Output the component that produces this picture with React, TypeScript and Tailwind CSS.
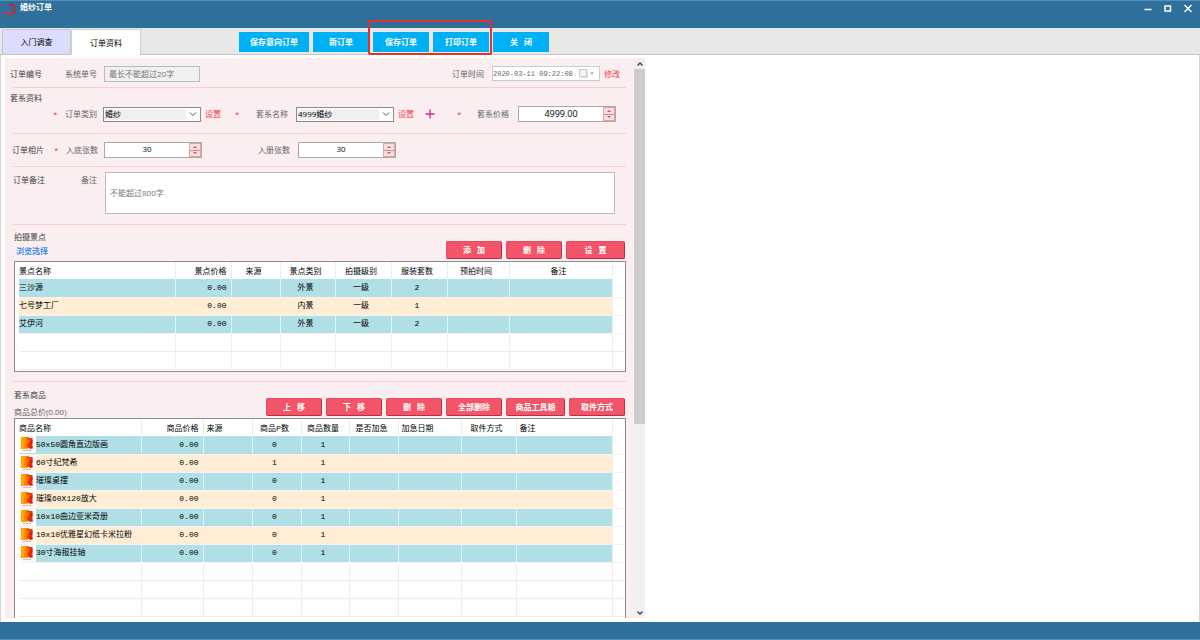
import { useState } from "react";
import type { ReactNode } from "react";

type Align = "left" | "center" | "right";

type Column = {
  title: string;
  width: string;
  align: Align;
  pad?: boolean;
};

const spotColumns: Column[] = [
  { title: "景点名称", width: "w-[156px]", align: "left" },
  { title: "景点价格", width: "w-14", align: "right" },
  { title: "来源", width: "w-[49px]", align: "center" },
  { title: "景点类别", width: "w-[55px]", align: "center" },
  { title: "拍摄级别", width: "w-14", align: "center" },
  { title: "服装套数", width: "w-14", align: "center" },
  { title: "预拍时间", width: "w-[62px]", align: "center" },
  { title: "备注", width: "w-auto", align: "center" },
];

const spots = [
  ["三沙源", "0.00", "", "外景", "一级", "2", "", ""],
  ["七号梦工厂", "0.00", "", "内景", "一级", "1", "", ""],
  ["艾伊河", "0.00", "", "外景", "一级", "2", "", ""],
];

const goodsColumns: Column[] = [
  { title: "商品名称", width: "w-[122px]", align: "left" },
  { title: "商品价格", width: "w-[62px]", align: "right" },
  { title: "来源", width: "w-[49px]", align: "left", pad: true },
  { title: "商品P数", width: "w-[49px]", align: "center" },
  { title: "商品数量", width: "w-12", align: "center" },
  { title: "是否加急", width: "w-[49px]", align: "center" },
  { title: "加急日期", width: "w-[63px]", align: "left", pad: true },
  { title: "取件方式", width: "w-[55px]", align: "center" },
  { title: "备注", width: "w-auto", align: "left", pad: true },
];

const goods = [
  ["50x50圆角直边版画", "0.00", "", "0", "1", "", "", "", ""],
  ["60寸纪梵希", "0.00", "", "1", "1", "", "", "", ""],
  ["璀璨桌摆", "0.00", "", "0", "1", "", "", "", ""],
  ["璀璨60X120放大", "0.00", "", "0", "1", "", "", "", ""],
  ["10x10曲边亚米奇册", "0.00", "", "0", "1", "", "", "", ""],
  ["10x10优雅星幻纸卡米拉粉", "0.00", "", "0", "1", "", "", "", ""],
  ["30寸海报挂轴", "0.00", "", "0", "1", "", "", "", ""],
];

const alignClass: Record<Align, string> = {
  left: "text-left",
  center: "text-center",
  right: "text-right",
};

function ProductIcon() {
  return (
    <svg viewBox="0 0 14 17" className="h-[17px] w-3.5 shrink-0" aria-hidden="true">
      <rect width="14" height="17" fill="#fbf6f3" />
      <rect x="1" y="1" width="7" height="12" fill="#ffa800" />
      <path d="M5 1 H9 V12 H4 Z" fill="#f98200" />
      <path d="M7 2 H12.5 V12.5 H10 L7 11 Z" fill="#ee3a10" />
      <path d="M10 5 L12.5 3.5 V7 L10.5 9 L12.5 11 V12.5 H9.5 Z" fill="#d0240c" />
      <path d="M6.5 2 L10 4.5 L7 9 Z" fill="#ff6a00" />
      <path d="M3 14.5 H5 M6 14.5 H8 M9 14.5 H11" stroke="#c9a5a5" strokeWidth="1" />
    </svg>
  );
}

function DataTable({
  columns,
  rows,
  blank,
  icons = false,
}: {
  columns: Column[];
  rows: string[][];
  blank: number;
  icons?: boolean;
}) {
  return (
    <table className="w-full table-fixed border-collapse text-[8px] leading-3 text-black">
      <thead>
        <tr className="h-[17px]">
          {columns.map((c) => (
            <th
              key={c.title}
              className={`${c.width} ${alignClass[c.align]} ${
                c.pad ? "pl-[3px]" : "pl-0"
              } whitespace-nowrap border-r border-[#ececec] py-0 pr-1 font-normal`}
            >
              {c.title}
            </th>
          ))}
          <th className="w-[13px] p-0" />
        </tr>
      </thead>
      <tbody className="font-['Liberation_Mono','Noto_Sans_CJK_SC',monospace]">
        {rows.map((row, i) => (
          <tr key={row[0]} className="h-[18px]">
            {row.map((cell, j) => (
              <td
                key={j}
                className={`${alignClass[columns[j].align]} ${
                  i % 2 === 0 ? "border-r-[#e4f3f5] bg-[#b0dfe5]" : "border-r-[#f9ecda] bg-[#ffeed5]"
                } whitespace-nowrap border-b border-r border-b-[#f4f4f0] p-0 ${j === 0 ? "" : "pr-1"}`}
              >
                {icons && j === 0 ? (
                  <span className="flex h-[17px] items-center">
                    <span className="flex w-[17px] shrink-0 bg-white pl-px">
                      <ProductIcon />
                    </span>
                    {cell}
                  </span>
                ) : (
                  cell
                )}
              </td>
            ))}
            <td className="border-b border-[#f2f2f2] p-0" />
          </tr>
        ))}
        {Array.from({ length: blank }, (_, i) => (
          <tr key={i} className="h-[18px]">
            {columns.map((c) => (
              <td key={c.title} className="border-b border-r border-[#ececec] p-0" />
            ))}
            <td className="border-b border-[#ececec] p-0" />
          </tr>
        ))}
      </tbody>
    </table>
  );
}

function BlueButton({ children, className }: { children: ReactNode; className: string }) {
  return (
    <button
      type="button"
      className={`${className} h-5 whitespace-pre bg-[#00b0f5] text-[8px] font-bold leading-3 text-white`}
    >
      {children}
    </button>
  );
}

function RedButton({ children, className = "w-14" }: { children: ReactNode; className?: string }) {
  return (
    <button
      type="button"
      className={`${className} h-[18px] whitespace-pre rounded-xs border border-[#e34b62] border-b-[#bf2c4a] border-r-[#bf2c4a] bg-[#f15567] text-[8px] font-bold leading-3 text-white`}
    >
      {children}
    </button>
  );
}

function Star({ className }: { className: string }) {
  return <span className={`${className} shrink-0 text-[#e0455f]`}>*</span>;
}

function SelectBox({ id, options, className }: { id: string; options: string[]; className: string }) {
  return (
    <div className={`${className} relative h-[15px] shrink-0 border border-[#8a8a8a] bg-white`}>
      <select
        id={id}
        className="block h-full w-full appearance-none border border-white bg-[#efefef] p-0 text-[8px] leading-none text-black outline-none"
      >
        {options.map((o) => (
          <option key={o}>{o}</option>
        ))}
      </select>
      <span className="pointer-events-none absolute inset-y-0 right-0 flex w-3.5 items-center justify-center bg-white">
        <svg viewBox="0 0 8 8" className="h-2 w-2" fill="none" stroke="#555" aria-hidden="true">
          <path d="M1 2.5 L4 5.5 L7 2.5" />
        </svg>
      </span>
    </div>
  );
}

function SpinBox({ id, initial, step, digits = 0 }: { id: string; initial: number; step: number; digits?: number }) {
  const [value, setValue] = useState(initial.toFixed(digits));
  const change = (delta: number) => setValue((Number(value) + delta).toFixed(digits));

  return (
    <div className="flex h-4 w-[98px] shrink-0 border border-[#a9a9a9] bg-white">
      <input
        id={id}
        value={value}
        onChange={(e) => setValue(e.target.value)}
        className={`${
          digits ? "text-[9px]" : "pb-0.5 text-[8px]"
        } min-w-0 flex-1 text-center font-['Open_Sans',sans-serif] leading-3 text-black outline-none`}
      />
      <div className="flex w-3 flex-col border border-[#d9a5a5]">
        <button
          type="button"
          aria-label="增加"
          onClick={() => change(step)}
          className="flex flex-1 items-center justify-center border-b border-[#c98f8f] bg-[#fbdcdc]"
        >
          <svg viewBox="0 0 6 4" className="h-1 w-1.5" fill="#d0565b" aria-hidden="true">
            <path d="M1 3 L3 1 L5 3 Z" />
          </svg>
        </button>
        <button
          type="button"
          aria-label="减少"
          onClick={() => change(-step)}
          className="flex flex-1 items-center justify-center bg-[#fbdcdc]"
        >
          <svg viewBox="0 0 6 4" className="h-1 w-1.5" fill="#d0565b" aria-hidden="true">
            <path d="M1 1 L3 3 L5 1 Z" />
          </svg>
        </button>
      </div>
    </div>
  );
}

function Divider() {
  return <hr className="ml-2 mr-2 shrink-0 border-t border-[#f6cfd4]" />;
}

function TitleBar() {
  return (
    <header className="flex h-7 shrink-0 items-start justify-between border-t border-[#4a93c2] bg-[#2f709b]">
      <div className="flex items-start gap-1 pl-0.5">
        <svg viewBox="0 0 15 15" className="mt-px h-[15px] w-3.5" fill="none" aria-hidden="true">
          <path d="M7.5 2.5 C10 2 12 3 13 5 C14.5 8.5 13 12 9 13.5" stroke="#c3262e" strokeWidth="2" />
          <path d="M1 10.5 L3.5 12 L7 11 L11 12" stroke="#d8323a" strokeWidth="1.4" />
          <path d="M11 1.5 L13 3 M10 7 L12.5 9" stroke="#8d3550" strokeWidth="1.2" />
        </svg>
        <h1 className="text-[8px] font-bold leading-3 text-white">婚纱订单</h1>
      </div>
      <div className="flex gap-3 pr-2 pt-0.5">
        <button type="button" aria-label="最小化">
          <svg viewBox="0 0 8 10" className="h-2.5 w-2" stroke="#fff" strokeWidth="1.5" aria-hidden="true">
            <path d="M0.5 6.5 H7.5" />
          </svg>
        </button>
        <button type="button" aria-label="最大化">
          <svg viewBox="0 0 8 10" className="h-2.5 w-2" fill="none" stroke="#fff" strokeWidth="1.5" aria-hidden="true">
            <rect x="1" y="3" width="5.5" height="5" />
          </svg>
        </button>
        <button type="button" aria-label="关闭">
          <svg viewBox="0 0 8 10" className="h-2.5 w-2" stroke="#fff" strokeWidth="1.5" aria-hidden="true">
            <path d="M0.5 2 L7.5 9 M7.5 2 L0.5 9" />
          </svg>
        </button>
      </div>
    </header>
  );
}

function Toolbar() {
  return (
    <nav className="flex h-[27px] shrink-0 items-end border-b border-[#c4c4c4] bg-[#e8e8e8] pl-0.5 text-black">
      <button
        type="button"
        className="h-[25px] w-[69px] rounded-t-xs border border-b-0 border-[#c6c6d8] bg-[#dcdcff] text-[8px] leading-3"
      >
        入门调查
      </button>
      <button
        type="button"
        className="-mb-px h-[26px] w-[70px] rounded-t-xs border border-b-0 border-[#d0d0d0] bg-white text-[8px] leading-3"
      >
        订单资料
      </button>
      <div className="ml-[98px] flex gap-1 pb-0.5">
        <BlueButton className="w-[70px]">保存意向订单</BlueButton>
        <BlueButton className="w-14">新订单</BlueButton>
        <div className="relative flex gap-1">
          <BlueButton className="w-14">保存订单</BlueButton>
          <BlueButton className="w-14">打印订单</BlueButton>
          <div className="pointer-events-none absolute -bottom-[3px] -left-[5px] -right-[3px] -top-3 rounded-xs border-2 border-[#e8302a]" />
        </div>
        <BlueButton className="w-14">{"关   闭"}</BlueButton>
      </div>
    </nav>
  );
}

function OrderForm() {
  return (
    <form className="flex min-w-0 flex-1 flex-col bg-[#faeef0] text-[8px] leading-3 text-[#666]">
      <div className="flex h-[29px] shrink-0 items-center pl-[5px] pr-3.5 pt-0.5">
        <span className="w-[55px] text-[#444]">订单编号</span>
        <label htmlFor="sysNo" className="w-[39px]">
          系统单号
        </label>
        <input
          id="sysNo"
          placeholder="最长不能超过20字"
          className="h-4 w-24 border border-[#b5bcc4] bg-[#f0f0f0] px-1 outline-none placeholder:text-[#777]"
        />
        <label htmlFor="orderTime" className="ml-auto mr-2">
          订单时间
        </label>
        <div className="mr-1 flex h-[15px] w-[108px] items-center border border-[#c9ccd0] bg-white">
          <input
            id="orderTime"
            defaultValue="2020-03-11 09:22:08"
            className="min-w-0 flex-1 bg-transparent font-['Liberation_Mono',monospace] text-[7px] outline-none"
          />
          <button type="button" aria-label="选择日期" className="mr-1">
            <svg viewBox="0 0 16 9" className="h-[9px] w-4" fill="none" aria-hidden="true">
              <rect x="0.5" y="0.5" width="7" height="7" fill="#f4f4f4" stroke="#ccc" />
              <path d="M8.5 2 V8.5 H2" stroke="#ddd" />
              <path d="M11 3.5 H15 L13 5.5 Z" fill="#999" />
            </svg>
          </button>
        </div>
        <a href="#edit" className="text-[#f5404a]">
          修改
        </a>
      </div>
      <Divider />

      <div className="flex h-[45px] shrink-0 flex-col pt-1">
        <span className="pl-[5px] text-[#444]">套系资料</span>
        <div className="flex h-5 items-center pl-12">
          <Star className="w-3" />
          <label htmlFor="orderType" className="w-[38px] shrink-0">
            订单类别
          </label>
          <SelectBox id="orderType" options={["婚纱", "写真"]} className="w-[98px]" />
          <a href="#types" className="ml-1 w-[30px] shrink-0 text-[#f5404a]">
            设置
          </a>
          <Star className="w-[21px]" />
          <label htmlFor="pack" className="w-10 shrink-0">
            套系名称
          </label>
          <SelectBox id="pack" options={["4999婚纱", "5999婚纱"]} className="w-[98px]" />
          <a href="#packs" className="ml-1 w-[27px] shrink-0 text-[#f5404a]">
            设置
          </a>
          <button type="button" aria-label="添加套系" className="mr-[22px] shrink-0">
            <svg viewBox="0 0 10 10" className="h-2.5 w-2.5" stroke="#d6248f" strokeWidth="1.3" aria-hidden="true">
              <path d="M5 0.5 V9.5 M0.5 5 H9.5" />
            </svg>
          </button>
          <Star className="w-5" />
          <label htmlFor="price" className="w-[41px] shrink-0">
            套系价格
          </label>
          <SpinBox id="price" initial={4999} step={100} digits={2} />
        </div>
      </div>
      <Divider />

      <div className="flex h-8 shrink-0 items-center pl-[7px]">
        <span className="w-[42px] text-[#444]">订单相片</span>
        <Star className="w-3" />
        <label htmlFor="negatives" className="w-[38px]">
          入底张数
        </label>
        <SpinBox id="negatives" initial={30} step={1} />
        <label htmlFor="albums" className="ml-14 w-10">
          入册张数
        </label>
        <SpinBox id="albums" initial={30} step={1} />
      </div>
      <Divider />

      <div className="flex h-[57px] shrink-0 items-start pl-2 pr-[19px] pt-[5px]">
        <span className="w-[68px] pt-0.5 text-[#444]">订单备注</span>
        <label htmlFor="remark" className="w-6 pt-0.5">
          备注
        </label>
        <textarea
          id="remark"
          placeholder="不能超过800字"
          className="h-[42px] min-w-0 flex-1 resize-none border border-[#bdbdbd] bg-white px-1 py-3.5 outline-none placeholder:text-[#777]"
        />
      </div>
      <Divider />

      <div className="flex h-9 shrink-0 items-end justify-between pl-[9px] pr-[9px]">
        <div className="flex flex-col gap-0.5 pb-1">
          <span className="text-[#444]">拍摄景点</span>
          <a href="#browse" className="pl-0.5 font-medium text-[#1a80f0]">
            浏览选择
          </a>
        </div>
        <div className="flex gap-1 pb-0.5">
          <RedButton>{"添   加"}</RedButton>
          <RedButton>{"删   除"}</RedButton>
          <RedButton className="w-[59px]">{"设   置"}</RedButton>
        </div>
      </div>
      <div className="mb-[9px] ml-[9px] mr-2 h-[111px] shrink-0 overflow-hidden border border-[#8c8c8c] bg-white pl-1">
        <DataTable columns={spotColumns} rows={spots} blank={2} />
      </div>
      <Divider />

      <div className="flex h-9 shrink-0 items-end justify-between pl-[9px] pr-[9px]">
        <div className="flex flex-col gap-[5px]">
          <span className="text-[#444]">套系商品</span>
          <span>商品总价(0.00)</span>
        </div>
        <div className="flex gap-1 pb-0.5">
          <RedButton>{"上   移"}</RedButton>
          <RedButton>{"下   移"}</RedButton>
          <RedButton>{"删   除"}</RedButton>
          <RedButton>全部删除</RedButton>
          <RedButton className="w-[59px]">商品工具箱</RedButton>
          <RedButton>取件方式</RedButton>
        </div>
      </div>
      <div className="ml-[9px] mr-2 flex-1 overflow-hidden border border-b-0 border-[#8c8c8c] bg-white pl-1">
        <DataTable columns={goodsColumns} rows={goods} blank={3} icons />
      </div>
    </form>
  );
}

function ScrollBar() {
  return (
    <div className="flex w-[11px] shrink-0 flex-col bg-[#f0f0f0]">
      <button type="button" aria-label="向上滚动" className="flex h-[11px] items-center justify-center">
        <svg viewBox="0 0 8 8" className="h-2 w-2" fill="none" stroke="#444" strokeWidth="1.4" aria-hidden="true">
          <path d="M1.5 5.5 L4 3 L6.5 5.5" />
        </svg>
      </button>
      <div className="flex-[66] bg-[#cdcdcd]" />
      <div className="flex-[34]" />
      <button type="button" aria-label="向下滚动" className="flex h-[11px] items-center justify-center">
        <svg viewBox="0 0 8 8" className="h-2 w-2" fill="none" stroke="#444" strokeWidth="1.4" aria-hidden="true">
          <path d="M1.5 2.5 L4 5 L6.5 2.5" />
        </svg>
      </button>
    </div>
  );
}

export default function App() {
  return (
    <div
      lang="zh-CN"
      className="flex min-h-screen flex-col bg-white font-['Open_Sans','Noto_Sans_CJK_SC',sans-serif]"
    >
      <TitleBar />
      <Toolbar />
      <main className="grid flex-1 grid-cols-[43fr_37fr]">
        <div className="flex min-w-0 border-l border-[#d5d5d5] pb-1 pl-1 pt-[3px]">
          <OrderForm />
          <ScrollBar />
        </div>
        <div className="border-r border-[#d5d5d5]" />
      </main>
      <footer className="h-[18px] shrink-0 border-b border-[#4a93c2] bg-[#2f709b]" />
    </div>
  );
}
